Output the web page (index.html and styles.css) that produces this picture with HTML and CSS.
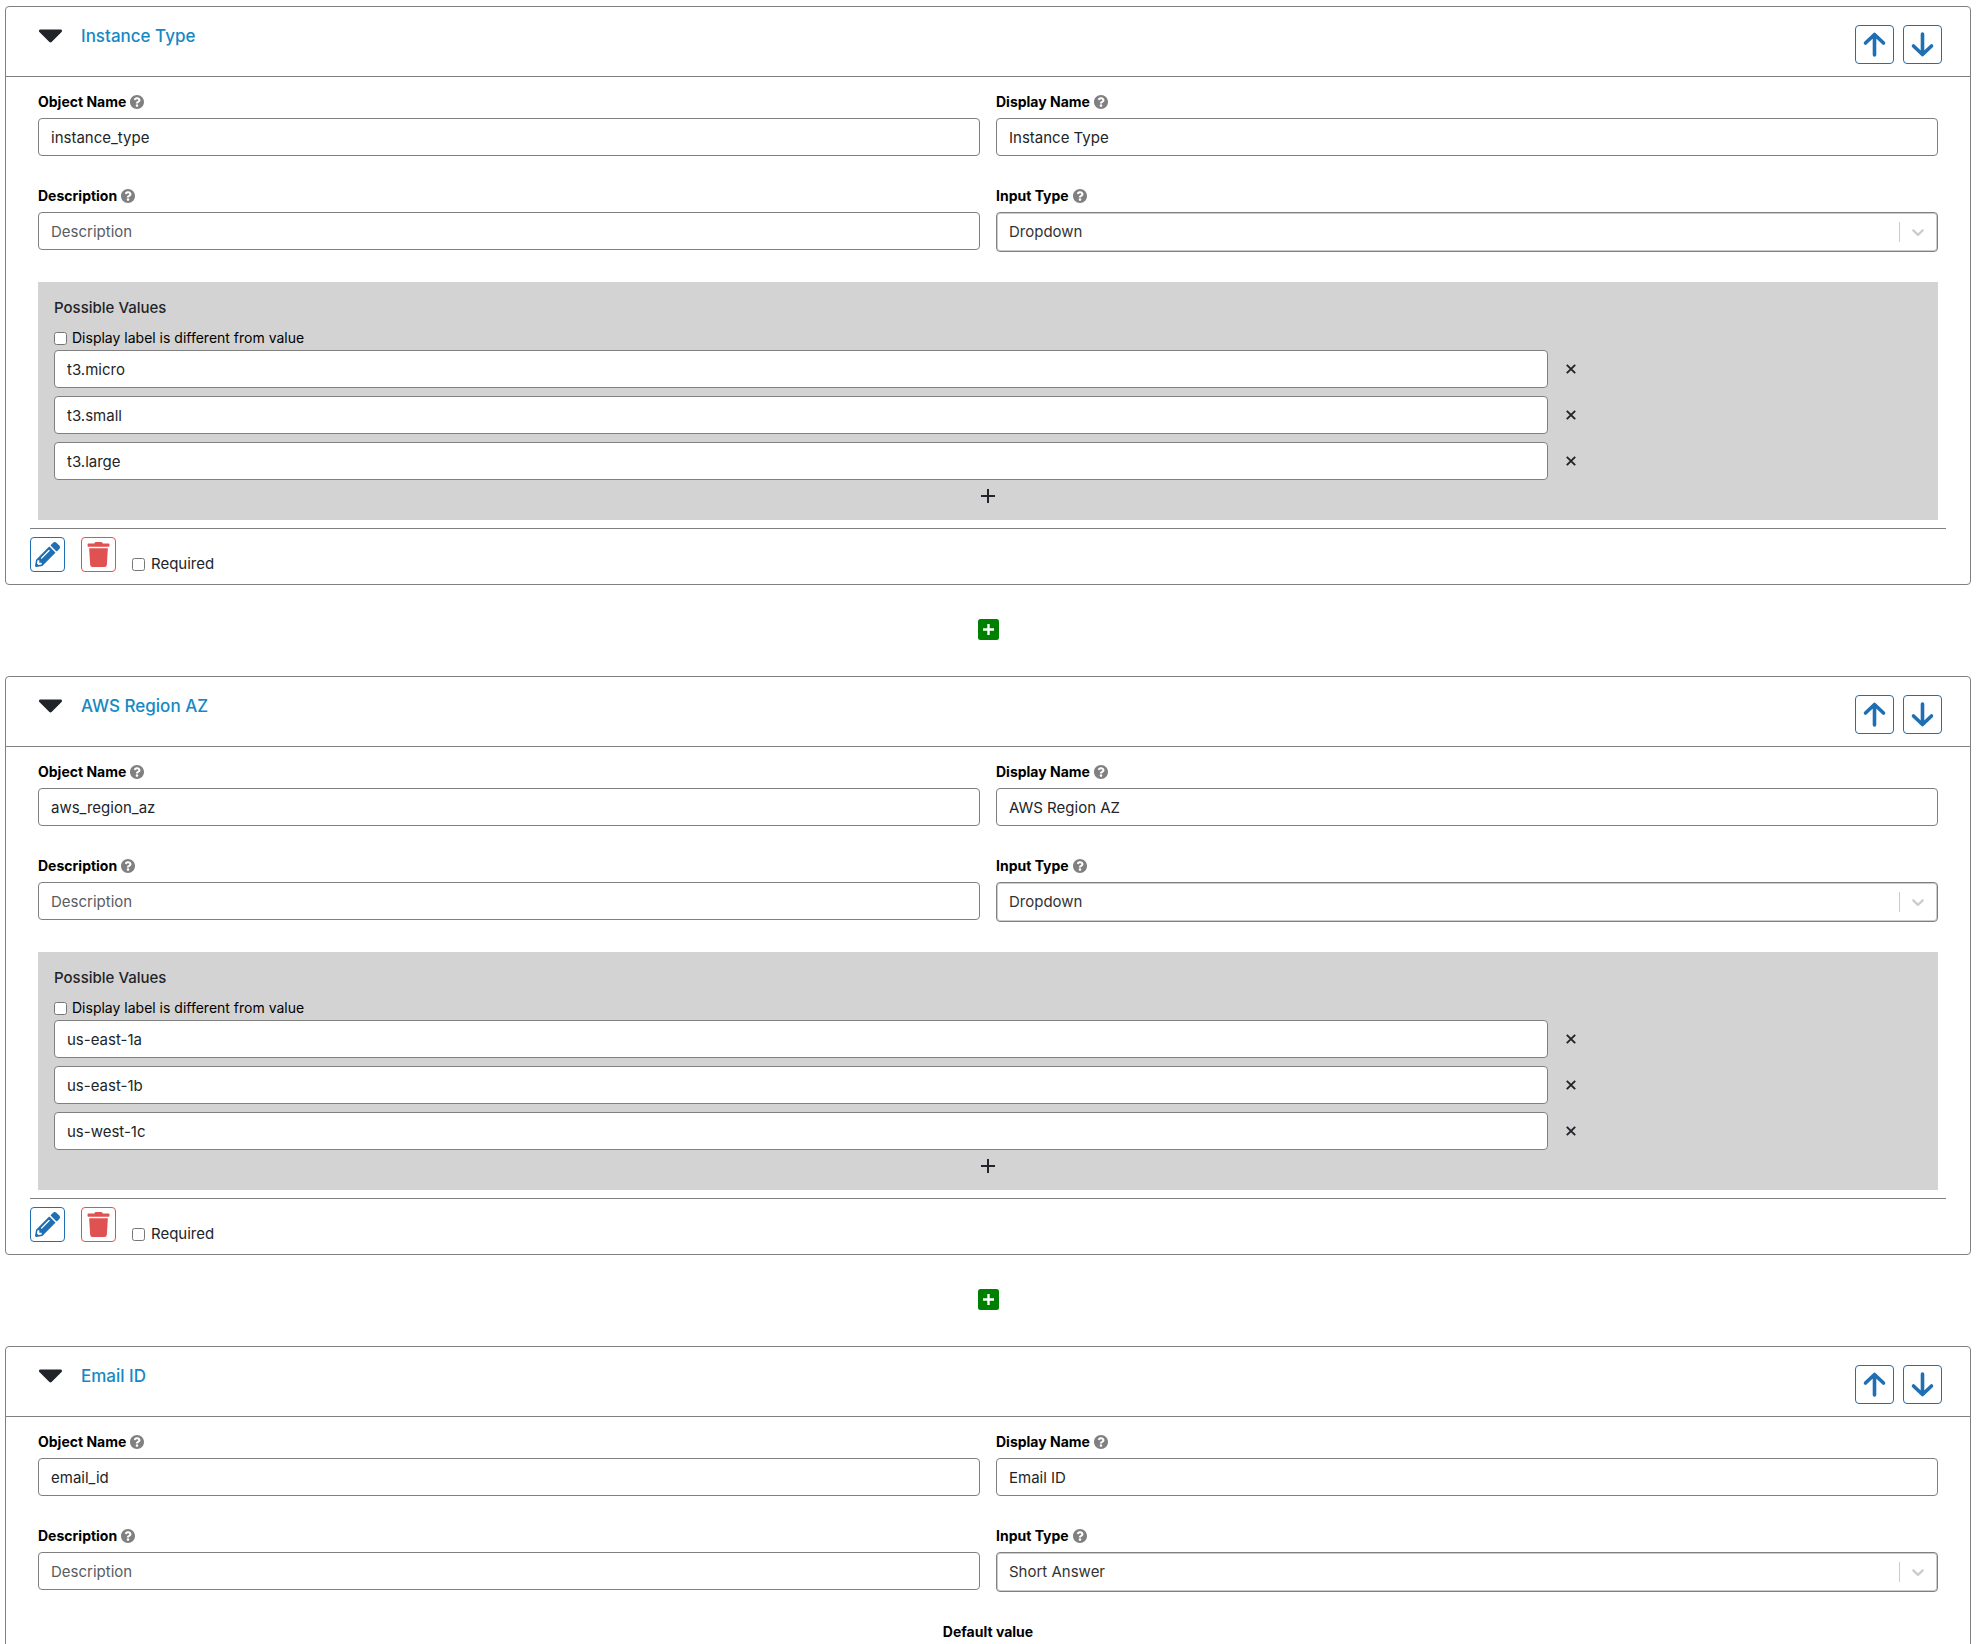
FILE: index.html
```html
<!DOCTYPE html>
<html lang="en">
<head>
<meta charset="utf-8">
<title>Form fields</title>
<link rel="stylesheet" href="styles.css">
</head>
<body>
<svg class="sprite" aria-hidden="true">
  <symbol id="caret" viewBox="12 192 296 169"><path d="M31.3 192h257.3c17.8 0 26.7 21.5 14.1 34.1L174.1 354.7c-7.8 7.8-20.5 7.8-28.3 0L17.2 226.1C4.6 213.5 13.5 192 31.3 192z"/></symbol>
  <symbol id="help" viewBox="8 8 496 496"><path d="M504 256c0 136.997-111.043 248-248 248S8 392.997 8 256C8 119.083 119.043 8 256 8s248 111.083 248 248zM262.655 90c-54.497 0-89.255 22.957-116.549 63.758-3.536 5.286-2.353 12.415 2.715 16.258l34.699 26.31c5.205 3.947 12.621 3.008 16.665-2.122 17.864-22.658 30.113-35.797 57.303-35.797 20.429 0 45.698 13.148 45.698 32.958 0 14.976-12.363 22.667-32.534 33.976C247.128 238.528 216 254.941 216 296v4c0 6.627 5.373 12 12 12h56c6.627 0 12-5.373 12-12v-1.333c0-28.462 83.186-29.647 83.186-106.667 0-58.002-60.165-102-116.531-102zM256 338c-25.365 0-46 20.635-46 46 0 25.364 20.635 46 46 46s46-20.636 46-46c0-25.364-20.635-46-46-46z"/></symbol>
  <symbol id="up" viewBox="0 0 25 25"><path d="M12.500 23V3M3.500 11l9-8.500 9 8.500" fill="none" stroke="currentColor" stroke-width="3.600" stroke-linecap="round" stroke-linejoin="round"/></symbol>
  <symbol id="down" viewBox="0 0 25 25"><path d="M12.500 2v20M3.500 14l9 8.500 9-8.500" fill="none" stroke="currentColor" stroke-width="3.600" stroke-linecap="round" stroke-linejoin="round"/></symbol>
  <symbol id="chevron" viewBox="0 0 20 20"><path d="M4.516 7.548c0.436-0.446 1.043-0.481 1.576 0l3.908 3.747 3.908-3.747c0.533-0.481 1.141-0.446 1.574 0 0.436 0.445 0.408 1.197 0 1.615-0.406 0.418-4.695 4.502-4.695 4.502-0.217 0.223-0.502 0.335-0.787 0.335s-0.570-0.112-0.789-0.335c0 0-4.287-4.084-4.695-4.502s-0.436-1.170 0-1.615z"/></symbol>
  <symbol id="cross" viewBox="0 0 10 10"><path d="M.8.800l8.400 8.400M9.200.8L.8 9.200" fill="none" stroke="currentColor" stroke-width="1.900"/></symbol>
  <symbol id="plus" viewBox="0 0 14 14"><path d="M7 0v14M0 7h14" fill="none" stroke="currentColor" stroke-width="2"/></symbol>
  <symbol id="plus-square" viewBox="0 0 21 21"><rect width="21" height="21" rx="2.500"/><path d="M10.500 5v11M5 10.500h11" fill="none" stroke="#fff" stroke-width="2.400"/></symbol>
  <symbol id="pencil" viewBox="0 0 512 512"><path d="M497.900 142.100l-46.100 46.100c-4.700 4.700-12.300 4.700-17 0l-111-111c-4.700-4.700-4.700-12.300 0-17l46.100-46.100c18.700-18.700 49.100-18.700 67.900 0l60.100 60.100c18.800 18.700 18.800 49.100 0 67.900zM284.200 99.800L21.600 362.400.4 483.900c-2.900 16.400 11.400 30.600 27.800 27.800l121.500-21.300 262.600-262.600c4.700-4.700 4.700-12.300 0-17l-111-111c-4.800-4.700-12.400-4.700-17.100 0zM124.100 339.900c-5.500-5.500-5.500-14.300 0-19.800l154-154c5.500-5.500 14.300-5.500 19.800 0s5.500 14.300 0 19.800l-154 154c-5.500 5.500-14.300 5.500-19.800 0zM88 424h48v36.300l-64.500 11.300-31.100-31.100L51.700 376H88v48z"/></symbol>
  <symbol id="trash" viewBox="0 0 448 512"><path d="M432 32H312l-9.400-18.700A24 24 0 0 0 281.100 0H166.800a23.720 23.720 0 0 0-21.400 13.300L136 32H16A16 16 0 0 0 0 48v32a16 16 0 0 0 16 16h416a16 16 0 0 0 16-16V48a16 16 0 0 0-16-16zM53.200 467a48 48 0 0 0 47.900 45h245.800a48 48 0 0 0 47.900-45L416 128H32z"/></symbol>
</svg>

<main class="fields">
  <section class="card">
    <header class="card-header">
      <button class="toggle" type="button" aria-label="Collapse"><svg><use href="#caret"/></svg></button>
      <h2 class="card-title">Instance Type</h2>
      <button class="move" type="button" aria-label="Move up"><svg><use href="#up"/></svg></button>
      <button class="move" type="button" aria-label="Move down"><svg><use href="#down"/></svg></button>
    </header>
    <div class="card-body">
      <div class="field">
        <label class="field-label" for="object-1">Object Name <svg class="help"><use href="#help"/></svg></label>
        <input class="text-input" id="object-1" type="text" value="instance_type">
      </div>
      <div class="field">
        <label class="field-label" for="display-1">Display Name <svg class="help"><use href="#help"/></svg></label>
        <input class="text-input" id="display-1" type="text" value="Instance Type">
      </div>
      <div class="field">
        <label class="field-label" for="description-1">Description <svg class="help"><use href="#help"/></svg></label>
        <input class="text-input" id="description-1" type="text" placeholder="Description">
      </div>
      <div class="field">
        <label class="field-label" for="type-1">Input Type <svg class="help"><use href="#help"/></svg></label>
        <div class="select-wrap">
          <select class="select" id="type-1"><option>Dropdown</option></select>
          <span class="indicator"><svg><use href="#chevron"/></svg></span>
        </div>
      </div>
      <div class="values">
        <h3 class="values-title">Possible Values</h3>
        <label class="check small"><input type="checkbox">Display label is different from value</label>
        <div class="value-list">
          <div class="value-row"><input class="text-input" type="text" aria-label="Value 1" value="t3.micro"><button class="remove" type="button" aria-label="Remove"><svg><use href="#cross"/></svg></button></div>
          <div class="value-row"><input class="text-input" type="text" aria-label="Value 2" value="t3.small"><button class="remove" type="button" aria-label="Remove"><svg><use href="#cross"/></svg></button></div>
          <div class="value-row"><input class="text-input" type="text" aria-label="Value 3" value="t3.large"><button class="remove" type="button" aria-label="Remove"><svg><use href="#cross"/></svg></button></div>
        </div>
        <button class="add-value" type="button" aria-label="Add value"><svg><use href="#plus"/></svg></button>
      </div>
    </div>
    <footer class="card-footer">
      <button class="action edit" type="button" aria-label="Edit"><svg><use href="#pencil"/></svg></button>
      <button class="action delete" type="button" aria-label="Delete"><svg><use href="#trash"/></svg></button>
      <label class="check"><input type="checkbox">Required</label>
    </footer>
  </section>

  <button class="add-field" type="button" aria-label="Add field"><svg><use href="#plus-square"/></svg></button>

  <section class="card">
    <header class="card-header">
      <button class="toggle" type="button" aria-label="Collapse"><svg><use href="#caret"/></svg></button>
      <h2 class="card-title">AWS Region AZ</h2>
      <button class="move" type="button" aria-label="Move up"><svg><use href="#up"/></svg></button>
      <button class="move" type="button" aria-label="Move down"><svg><use href="#down"/></svg></button>
    </header>
    <div class="card-body">
      <div class="field">
        <label class="field-label" for="object-2">Object Name <svg class="help"><use href="#help"/></svg></label>
        <input class="text-input" id="object-2" type="text" value="aws_region_az">
      </div>
      <div class="field">
        <label class="field-label" for="display-2">Display Name <svg class="help"><use href="#help"/></svg></label>
        <input class="text-input" id="display-2" type="text" value="AWS Region AZ">
      </div>
      <div class="field">
        <label class="field-label" for="description-2">Description <svg class="help"><use href="#help"/></svg></label>
        <input class="text-input" id="description-2" type="text" placeholder="Description">
      </div>
      <div class="field">
        <label class="field-label" for="type-2">Input Type <svg class="help"><use href="#help"/></svg></label>
        <div class="select-wrap">
          <select class="select" id="type-2"><option>Dropdown</option></select>
          <span class="indicator"><svg><use href="#chevron"/></svg></span>
        </div>
      </div>
      <div class="values">
        <h3 class="values-title">Possible Values</h3>
        <label class="check small"><input type="checkbox">Display label is different from value</label>
        <div class="value-list">
          <div class="value-row"><input class="text-input" type="text" aria-label="Value 1" value="us-east-1a"><button class="remove" type="button" aria-label="Remove"><svg><use href="#cross"/></svg></button></div>
          <div class="value-row"><input class="text-input" type="text" aria-label="Value 2" value="us-east-1b"><button class="remove" type="button" aria-label="Remove"><svg><use href="#cross"/></svg></button></div>
          <div class="value-row"><input class="text-input" type="text" aria-label="Value 3" value="us-west-1c"><button class="remove" type="button" aria-label="Remove"><svg><use href="#cross"/></svg></button></div>
        </div>
        <button class="add-value" type="button" aria-label="Add value"><svg><use href="#plus"/></svg></button>
      </div>
    </div>
    <footer class="card-footer">
      <button class="action edit" type="button" aria-label="Edit"><svg><use href="#pencil"/></svg></button>
      <button class="action delete" type="button" aria-label="Delete"><svg><use href="#trash"/></svg></button>
      <label class="check"><input type="checkbox">Required</label>
    </footer>
  </section>

  <button class="add-field" type="button" aria-label="Add field"><svg><use href="#plus-square"/></svg></button>

  <section class="card">
    <header class="card-header">
      <button class="toggle" type="button" aria-label="Collapse"><svg><use href="#caret"/></svg></button>
      <h2 class="card-title">Email ID</h2>
      <button class="move" type="button" aria-label="Move up"><svg><use href="#up"/></svg></button>
      <button class="move" type="button" aria-label="Move down"><svg><use href="#down"/></svg></button>
    </header>
    <div class="card-body">
      <div class="field">
        <label class="field-label" for="object-3">Object Name <svg class="help"><use href="#help"/></svg></label>
        <input class="text-input" id="object-3" type="text" value="email_id">
      </div>
      <div class="field">
        <label class="field-label" for="display-3">Display Name <svg class="help"><use href="#help"/></svg></label>
        <input class="text-input" id="display-3" type="text" value="Email ID">
      </div>
      <div class="field">
        <label class="field-label" for="description-3">Description <svg class="help"><use href="#help"/></svg></label>
        <input class="text-input" id="description-3" type="text" placeholder="Description">
      </div>
      <div class="field">
        <label class="field-label" for="type-3">Input Type <svg class="help"><use href="#help"/></svg></label>
        <div class="select-wrap">
          <select class="select" id="type-3"><option>Short Answer</option></select>
          <span class="indicator"><svg><use href="#chevron"/></svg></span>
        </div>
      </div>
      <div class="field default-field">
        <label class="field-label" for="default-3">Default value</label>
        <input class="text-input" id="default-3" type="text">
      </div>
    </div>
  </section>
</main>
</body>
</html>
```
FILE: styles.css
```css
* {
  box-sizing: border-box;
}

body {
  margin: 0;
  background: #fff;
  color: #212529;
  font-family: Inter, "Liberation Sans", sans-serif;
  font-size: 15px;
  line-height: 20px;
}

button {
  display: flex;
  align-items: center;
  justify-content: center;
  padding: 0;
  border: 0;
  background: none;
  color: inherit;
  cursor: pointer;
}

svg {
  display: block;
  fill: currentColor;
}

.sprite {
  display: none;
}

.fields {
  display: flex;
  flex-direction: column;
  padding: 6px 5px;
}

.card {
  border: 1px solid gray;
  border-radius: 4px;
}

.card-header {
  display: flex;
  align-items: flex-start;
  gap: 9px;
  padding: 18px 28px 12px 33px;
  border-bottom: 1px solid gray;
}

.toggle {
  width: 23px;
  height: 22px;
}

.toggle svg {
  width: 23px;
  height: 14px;
}

.card-title {
  flex: 1;
  margin: 0 0 0 10px;
  color: #1589c4;
  font-size: 17px;
  font-weight: 500;
  line-height: 22px;
}

.move {
  width: 39px;
  height: 39px;
  border: 1px solid #1f6fb2;
  border-radius: 4px;
  color: #1f6fb2;
}

.move svg {
  width: 25px;
  height: 25px;
}

.card-body {
  display: grid;
  grid-template-columns: 1fr 1fr;
  gap: 30px 16px;
  padding: 15px 32px 8px;
}

.field {
  display: flex;
  flex-direction: column;
  gap: 6px;
}

.field-label {
  display: flex;
  align-items: center;
  gap: 4px;
  color: #000;
  font-size: 14px;
  font-weight: 700;
}

.help {
  width: 14px;
  height: 14px;
  color: gray;
}

.text-input,
.select {
  width: 100%;
  height: 38px;
  padding: 0 12px;
  border: 1px solid gray;
  border-radius: 4px;
  background: #fff;
  color: #212529;
  font: inherit;
}

.text-input::placeholder {
  color: #595c5f;
  opacity: 1;
}

.select-wrap {
  display: grid;
}

.select-wrap > * {
  grid-area: 1 / 1;
}

.select {
  height: 40px;
  appearance: none;
  box-shadow: inset 0 0 0 1px #ccc;
  color: #333;
}

.indicator {
  align-self: center;
  justify-self: end;
  padding: 0 10px 0 8px;
  border-left: 1px solid #ccc;
  color: #ccc;
  pointer-events: none;
}

.indicator svg {
  width: 20px;
  height: 20px;
}

.values {
  grid-column: 1 / -1;
  padding: 16px 16px 8px;
  background: #d3d3d3;
}

.values-title {
  margin: 0 0 10px;
  font-size: 15px;
  font-weight: 500;
  line-height: 20px;
}

.check {
  display: flex;
  align-items: center;
  gap: 6px;
  line-height: 16px;
}

.check input {
  width: 13px;
  height: 13px;
  margin: 0;
}

.small {
  gap: 5px;
  color: #000;
  font-size: 14px;
  line-height: 20px;
}

.value-list {
  display: grid;
  gap: 8px;
  margin-top: 2px;
}

.value-row {
  display: grid;
  grid-template-columns: 80% auto;
  justify-content: start;
  gap: 12px;
}

.remove {
  width: 22px;
  height: 38px;
}

.remove svg {
  width: 10px;
  height: 10px;
}

.add-value {
  width: 100%;
  height: 32px;
}

.add-value svg {
  width: 14px;
  height: 14px;
}

.card-footer {
  display: flex;
  align-items: flex-end;
  gap: 16px;
  margin: 0 24px;
  padding: 8px 0 12px;
  border-top: 1px solid gray;
}

.action {
  width: 35px;
  height: 35px;
  border: 1px solid currentColor;
  border-radius: 4px;
}

.action svg {
  width: 25px;
  height: 25px;
}

.edit {
  color: #1f6fb2;
}

.delete {
  color: #e05252;
}

.add-field {
  align-self: center;
  height: 91px;
  padding-bottom: 2px;
  color: green;
}

.add-field svg {
  width: 21px;
  height: 21px;
}

.default-field {
  grid-column: 1 / -1;
}

.default-field .field-label {
  justify-content: center;
}
```
